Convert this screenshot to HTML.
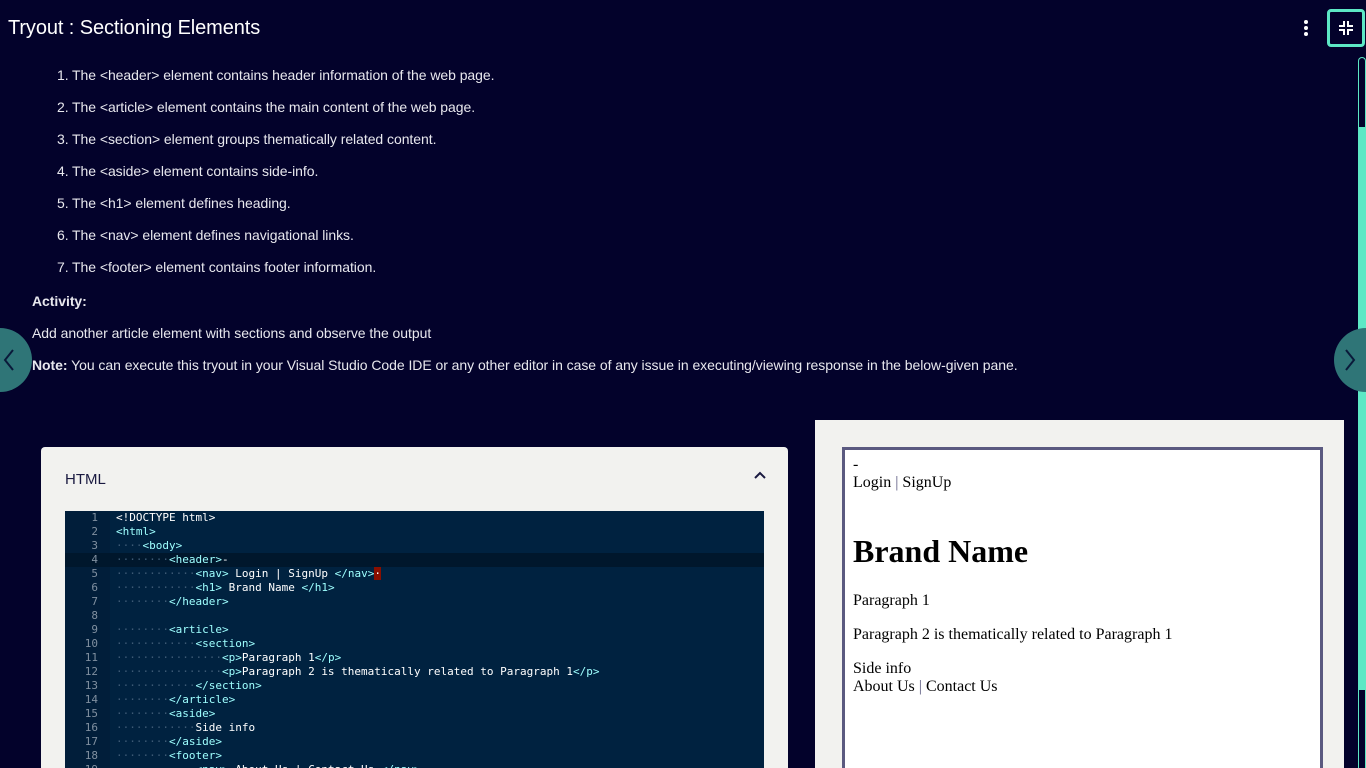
<!DOCTYPE html>
<html style="width:1366px;height:768px;overflow:hidden"><head><style>
*{margin:0;padding:0;box-sizing:border-box}
body{width:1366px;height:768px;background:#03022b;overflow:hidden;position:relative;font-family:"Liberation Sans",sans-serif;color:#e8e8ee}
.title{position:absolute;left:8px;top:17px;font-size:20px;color:#fff;letter-spacing:-0.1px}
ol{position:absolute;left:72px;top:66px;font-size:14px;list-style:none;letter-spacing:-0.05px}
ol li{height:32px;line-height:18px;position:relative}
ol li span{position:absolute;left:-15px}
.p{position:absolute;left:32px;font-size:14px;letter-spacing:-0.05px}
.circ{position:absolute;width:64px;height:64px;border-radius:50%;background:#2f7577;top:328px}
.editor{position:absolute;left:41px;top:447px;width:747px;height:321px;background:#f2f2ef;border-radius:4px 4px 0 0;overflow:hidden}
.editor .h{position:absolute;left:24px;top:24px;font-size:15px;color:#1a1a40}
.code{position:absolute;left:24px;top:64px;width:699px;height:257px;overflow:hidden;background:#002240;font-family:"DejaVu Sans Mono","Liberation Mono",monospace;font-size:11px;color:#fff}
.gut{position:absolute;left:0;top:0;width:45px;height:100%;background:#011e3a}
.ln{position:absolute;left:0;width:699px;height:14px;line-height:14px;white-space:pre}
.ln .n{display:inline-block;width:33px;text-align:right;color:#8090a0}
.ln .c{position:absolute;left:51px}
.t{color:#9effff}.d{color:#3d5a75}
.prev{position:absolute;left:815px;top:420px;width:529px;height:348px;background:#f2f2ef;overflow:hidden}
.frame{position:absolute;left:27px;top:27px;width:481px;height:340px;border:3px solid #5b5a80;background:#fff;font-family:"Liberation Serif",serif;color:#000;font-size:16px;padding:6px 8px}
</style></head><body>
<div class="title">Tryout : Sectioning Elements</div>
<div style="position:absolute;left:1304px;top:20px;width:4px">
<div style="width:4px;height:4px;background:#fff;border-radius:50%;margin-bottom:2px"></div><div style="width:4px;height:4px;background:#fff;border-radius:50%;margin-bottom:2px"></div><div style="width:4px;height:4px;background:#fff;border-radius:50%"></div></div>
<div style="position:absolute;left:1327px;top:9px;width:38px;height:38px;border:3px solid #5de8c5;border-radius:4px"></div>
<svg style="position:absolute;left:1338px;top:20px" width="16" height="16" viewBox="0 0 16 16" fill="none" stroke="#fff" stroke-width="2"><path d="M1 6H6V1M10 1V6H15M1 10H6V15M10 15V10H15"/></svg>
<div style="position:absolute;left:1358px;top:57px;width:8px;height:711px;border:1px solid #5de8c5;border-radius:4px 4px 0 0;border-bottom:none"></div>
<div style="position:absolute;left:1358px;top:127px;width:8px;height:563px;background:#5de8c5"></div>
<ol>
<li><span>1.</span>The &lt;header&gt; element contains header information of the web page.</li>
<li><span>2.</span>The &lt;article&gt; element contains the main content of the web page.</li>
<li><span>3.</span>The &lt;section&gt; element groups thematically related content.</li>
<li><span>4.</span>The &lt;aside&gt; element contains side-info.</li>
<li><span>5.</span>The &lt;h1&gt; element defines heading.</li>
<li><span>6.</span>The &lt;nav&gt; element defines navigational links.</li>
<li><span>7.</span>The &lt;footer&gt; element contains footer information.</li>
</ol>
<div class="p" style="top:293px"><b>Activity:</b></div>
<div class="p" style="top:325px">Add another article element with sections and observe the output</div>
<div class="p" style="top:357px"><b>Note:</b> You can execute this tryout in your Visual Studio Code IDE or any other editor in case of any issue in executing/viewing response in the below-given pane.</div>
<div class="circ" style="left:-32px"></div>
<svg style="position:absolute;left:3px;top:349px" width="12" height="22" viewBox="0 0 12 22"><path d="M10 1L2 11L10 21" stroke="#0a1a3a" stroke-width="2" fill="none"/></svg>
<div class="circ" style="left:1334px"></div>
<svg style="position:absolute;left:1344px;top:349px" width="12" height="22" viewBox="0 0 12 22"><path d="M2 1L10 11L2 21" stroke="#0a1a3a" stroke-width="2" fill="none"/></svg>
<div class="editor"><div class="h">HTML</div>
<svg style="position:absolute;left:713px;top:24px" width="12" height="8" viewBox="0 0 12 8"><path d="M1 7L6 2L11 7" stroke="#1a1a40" stroke-width="2" fill="none"/></svg>
<div class="code"><div class="gut"></div>
<div class="ln" style="top:0"><span class="n">1</span><span class="c">&lt;!DOCTYPE html&gt;</span></div>
<div class="ln" style="top:14px"><span class="n">2</span><span class="c t">&lt;html&gt;</span></div>
<div class="ln" style="top:28px"><span class="n">3</span><span class="c"><span class="d">····</span><span class="t">&lt;body&gt;</span></span></div>
<div class="ln" style="top:42px;background:#00172c"><span class="n">4</span><span class="c"><span class="d">········</span><span class="t">&lt;header&gt;</span>-</span></div>
<div class="ln" style="top:56px"><span class="n">5</span><span class="c"><span class="d">············</span><span class="t">&lt;nav&gt;</span> Login | SignUp <span class="t">&lt;/nav&gt;</span><span style="background:#8a0f00">·</span></span></div>
<div class="ln" style="top:70px"><span class="n">6</span><span class="c"><span class="d">············</span><span class="t">&lt;h1&gt;</span> Brand Name <span class="t">&lt;/h1&gt;</span></span></div>
<div class="ln" style="top:84px"><span class="n">7</span><span class="c"><span class="d">········</span><span class="t">&lt;/header&gt;</span></span></div>
<div class="ln" style="top:98px"><span class="n">8</span></div>
<div class="ln" style="top:112px"><span class="n">9</span><span class="c"><span class="d">········</span><span class="t">&lt;article&gt;</span></span></div>
<div class="ln" style="top:126px"><span class="n">10</span><span class="c"><span class="d">············</span><span class="t">&lt;section&gt;</span></span></div>
<div class="ln" style="top:140px"><span class="n">11</span><span class="c"><span class="d">················</span><span class="t">&lt;p&gt;</span>Paragraph 1<span class="t">&lt;/p&gt;</span></span></div>
<div class="ln" style="top:154px"><span class="n">12</span><span class="c"><span class="d">················</span><span class="t">&lt;p&gt;</span>Paragraph 2 is thematically related to Paragraph 1<span class="t">&lt;/p&gt;</span></span></div>
<div class="ln" style="top:168px"><span class="n">13</span><span class="c"><span class="d">············</span><span class="t">&lt;/section&gt;</span></span></div>
<div class="ln" style="top:182px"><span class="n">14</span><span class="c"><span class="d">········</span><span class="t">&lt;/article&gt;</span></span></div>
<div class="ln" style="top:196px"><span class="n">15</span><span class="c"><span class="d">········</span><span class="t">&lt;aside&gt;</span></span></div>
<div class="ln" style="top:210px"><span class="n">16</span><span class="c"><span class="d">············</span>Side info</span></div>
<div class="ln" style="top:224px"><span class="n">17</span><span class="c"><span class="d">········</span><span class="t">&lt;/aside&gt;</span></span></div>
<div class="ln" style="top:238px"><span class="n">18</span><span class="c"><span class="d">········</span><span class="t">&lt;footer&gt;</span></span></div>
<div class="ln" style="top:252px"><span class="n">19</span><span class="c"><span class="d">············</span><span class="t">&lt;nav&gt;</span> About Us | Contact Us <span class="t">&lt;/nav&gt;</span></span></div>
</div></div>
<div class="prev"><div class="frame">
<div style="line-height:18px">-</div>
<div style="line-height:18px">Login <span style="color:#5b5a80">|</span> SignUp</div>
<div style="font-size:32px;font-weight:bold;margin-top:41px;line-height:37px">Brand Name</div>
<div style="margin-top:22px;line-height:18px">Paragraph 1</div>
<div style="margin-top:16px;line-height:18px">Paragraph 2 is thematically related to Paragraph 1</div>
<div style="margin-top:16px;line-height:18px">Side info</div>
<div style="line-height:18px">About Us <span style="color:#5b5a80">|</span> Contact Us</div>
</div></div>
</body></html>
